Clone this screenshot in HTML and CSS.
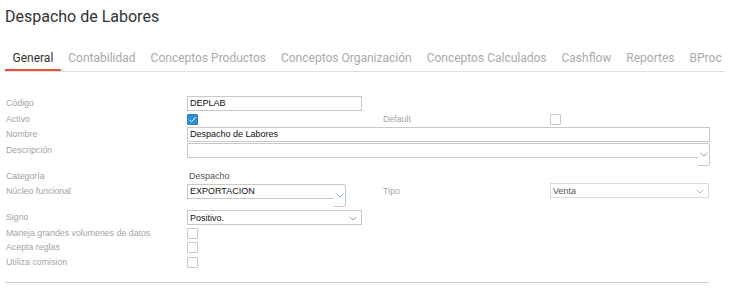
FILE: index.html
```html
<!DOCTYPE html>
<html>
<head>
    <meta charset="utf-8">
    <title>Despacho de Labores</title>
    <link rel="stylesheet" href="styles.css">
</head>
<body>
<div class="page">
    <h1 class="title">Despacho de Labores</h1>

    <div class="tabs">
        <a href="javascript:;" class="tab on">General</a>
        <a href="javascript:;" class="tab">Contabilidad</a>
        <a href="javascript:;" class="tab">Conceptos Productos</a>
        <a href="javascript:;" class="tab">Conceptos Organización</a>
        <a href="javascript:;" class="tab">Conceptos Calculados</a>
        <a href="javascript:;" class="tab">Cashflow</a>
        <a href="javascript:;" class="tab">Reportes</a>
        <a href="javascript:;" class="tab">BProc</a>
    </div>

    <div class="form">
        <div class="row">
            <label class="lbl lbl-input">Código</label>
            <div class="field w175">DEPLAB</div>
        </div>
        <div class="row">
            <label class="lbl lbl-check">Activo</label>
            <span class="check on">
                <svg width="11" height="11" viewBox="0 0 11 11"><polyline points="2.2,5.6 4.4,7.8 8.8,3.2" fill="none" stroke="#fff" stroke-width="1"/></svg>
            </span>
            <label class="lbl lbl-check">Default</label>
            <span class="check"></span>
        </div>
        <div class="row row-nombre">
            <label class="lbl lbl-input">Nombre</label>
            <div class="field wide">Despacho de Labores</div>
        </div>
        <div class="row row-desc">
            <label class="lbl lbl-input">Descripción</label>
            <div class="combo wide">
                <div class="combo-input"></div>
                <div class="combo-btn">
                    <svg width="8" height="5" viewBox="0 0 8 5"><polyline points="0.5,0.8 4,4 7.5,0.8" fill="none" stroke="#7ea9db" stroke-width="1"/></svg>
                </div>
            </div>
        </div>
        <div class="row row-cat">
            <label class="lbl lbl-check">Categoría</label>
            <span class="value">Despacho</span>
        </div>
        <div class="row">
            <label class="lbl lbl-input">Núcleo funcional</label>
            <div class="combo w159">
                <div class="combo-input">EXPORTACION</div>
                <div class="combo-btn">
                    <svg width="8" height="5" viewBox="0 0 8 5"><polyline points="0.5,0.8 4,4 7.5,0.8" fill="none" stroke="#7ea9db" stroke-width="1"/></svg>
                </div>
            </div>
            <label class="lbl lbl-input">Tipo</label>
            <div class="select select-off w159">
                <span>Venta</span>
                <svg width="8" height="5" viewBox="0 0 8 5"><polyline points="0.5,0.8 4,4 7.5,0.8" fill="none" stroke="#9bbde3" stroke-width="1"/></svg>
            </div>
        </div>
        <div class="row row-signo">
            <label class="lbl lbl-input">Signo</label>
            <div class="select w175">
                <span>Positivo.</span>
                <svg width="8" height="5" viewBox="0 0 8 5"><polyline points="0.5,0.8 4,4 7.5,0.8" fill="none" stroke="#7ea9db" stroke-width="1"/></svg>
            </div>
        </div>
        <div class="row">
            <label class="lbl lbl-check">Maneja grandes volumenes de datos</label>
            <span class="check"></span>
        </div>
        <div class="row">
            <label class="lbl lbl-check">Acepta reglas</label>
            <span class="check"></span>
        </div>
        <div class="row row-last">
            <label class="lbl lbl-check">Utiliza comision</label>
            <span class="check"></span>
        </div>
    </div>

    <div class="footer-line"></div>
</div>
</body>
</html>
```

FILE: styles.css
```css
*{margin:0;padding:0;box-sizing:border-box;text-decoration:none;}
body{background:#fff;font-family:"Liberation Sans",Arial,sans-serif;}
.page{width:740px;height:291px;overflow:hidden;}

.title{font-family:Roboto,"Noto Sans",sans-serif;font-weight:400;font-size:16px;line-height:20px;color:#333;padding:7px 0 0 5px;}

.tabs{display:flex;margin:24px 15px 0 5px;border-bottom:1px solid #ddd;}
.tab{flex:none;white-space:nowrap;font-family:Roboto,"Noto Sans",sans-serif;font-weight:400;font-size:12px;line-height:15px;color:#aaa;padding:0 7.5px 3px;border-bottom:2px solid transparent;}
.tab.on{color:#333;border-bottom-color:#e8503a;}

.form{padding:24px 0 0 6px;}
.row{display:grid;grid-template-columns:181px 196px 167px 159px;align-items:start;margin-top:2px;}
.row:first-child{margin-top:0;}
.row-nombre{margin-top:2px;}
.row-desc{margin-top:1px;}
.row-cat{margin-top:4px;}
.row-signo{margin-top:3px;}
.row-last{margin-top:3px;}

.lbl{font-size:8.8px;color:#a3a3a3;white-space:nowrap;}
.lbl-input{line-height:15px;}
.lbl-check{line-height:12px;}

.field{height:15px;border:1px solid #c8c8c8;font-size:9px;line-height:13px;color:#111;padding-left:2px;}
.w175{width:175px;}
.w159{width:159px;}
.wide{grid-column:2 / 5;width:523px;}

.check{display:block;width:11px;height:11px;border:1px solid #c8c8c8;border-radius:1px;margin-top:1px;}
.check svg{display:block;margin:-1px 0 0 -1px;}
.check.on{background:#2e8ed6;border-color:#2a80c4;}

.value{font-size:9px;line-height:12px;color:#555;padding-left:2px;}

.combo{display:flex;align-items:flex-start;}
.combo-input{flex:1;height:15px;border:1px solid #c8c8c8;border-right:none;font-size:9px;line-height:13px;color:#111;padding-left:2px;}
.combo-btn{width:12px;height:23px;border:1px solid #c8c8c8;border-left:none;border-radius:0 3px 3px 0;padding:8px 0 0 2px;}
.combo-btn svg{display:block;}

.select{display:flex;align-items:center;justify-content:space-between;height:15px;border:1px solid #c8c8c8;font-size:9px;color:#111;padding:0 4px 0 2px;}
.select svg{display:block;margin-top:2px;}
.select-off{border-color:#dcdcdc;color:#555;margin-top:-1px;}

.footer-line{margin:14px 0 0 5px;width:704px;border-top:1px solid #ccc;}
```
